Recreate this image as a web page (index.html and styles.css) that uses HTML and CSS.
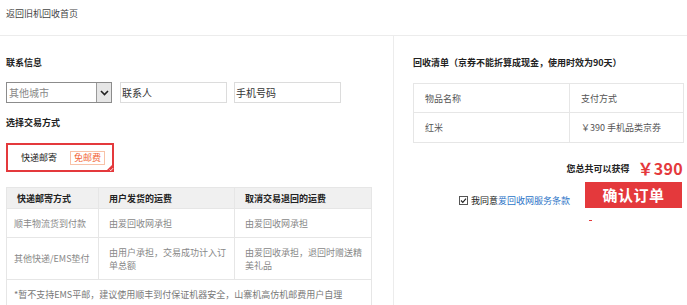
FILE: index.html
```html
<!DOCTYPE html>
<html lang="zh-CN">
<head>
<meta charset="utf-8">
<title>确认订单</title>
<link rel="stylesheet" href="styles.css">
</head>
<body>
<div class="topbar">返回旧机回收首页</div>
<div class="main">
  <div class="left">
    <div class="title t1">联系信息</div>
    <div class="fields">
      <div class="select">
        <span class="sel-text">其他城市</span>
        <span class="sel-arrow"><svg width="9" height="6" viewBox="0 0 9 6"><path d="M1 1 L4.5 4.5 L8 1" fill="none" stroke="#222" stroke-width="1.6"/></svg></span>
      </div>
      <div class="input">联系人</div>
      <div class="input">手机号码</div>
    </div>
    <div class="title t2">选择交易方式</div>
    <div class="option">
      <span class="opt-name">快递邮寄</span>
      <span class="badge">免邮费</span>
      <span class="corner"><svg width="9" height="9" viewBox="0 0 9 9"><path d="M9 0 L9 9 L0 9 Z" fill="#e4393c"/><path d="M4.6 6.6 L5.8 7.7 L8 5.2" fill="none" stroke="#fff" stroke-width="0.9"/></svg></span>
    </div>
    <table class="ship">
      <colgroup><col class="c1"><col class="c2"><col class="c3"></colgroup>
      <tr class="head"><th>快递邮寄方式</th><th>用户发货的运费</th><th>取消交易退回的运费</th></tr>
      <tr class="r1"><td>顺丰物流货到付款</td><td>由爱回收网承担</td><td>由爱回收网承担</td></tr>
      <tr class="r2"><td>其他快递/EMS垫付</td><td>由用户承担，交易成功计入订单总额</td><td>由爱回收承担，退回时赠送精美礼品</td></tr>
      <tr class="r3"><td colspan="3">*暂不支持EMS平邮，建议使用顺丰到付保证机器安全，山寨机高仿机邮费用户自理</td></tr>
    </table>
  </div>
  <div class="right">
    <div class="title t1">回收清单（京券不能折算成现金，使用时效为90天）</div>
    <table class="list">
      <colgroup><col class="l1"><col class="l2"></colgroup>
      <tr class="lh"><td>物品名称</td><td>支付方式</td></tr>
      <tr class="lr"><td>红米</td><td>￥390 手机品类京券</td></tr>
    </table>
    <div class="total"><span class="total-label">您总共可以获得</span><span class="total-num">￥390</span></div>
    <div class="confirm">
      <div class="agree">
        <span class="check"><svg width="9" height="9" viewBox="0 0 9 9"><rect x="0.5" y="0.5" width="8" height="8" fill="#fff" stroke="#555"/><path d="M2 4.5 L3.8 6.3 L7 2.6" fill="none" stroke="#222" stroke-width="1.2"/></svg></span>
        <span>我同意</span><span class="link">爱回收网服务条款</span>
      </div>
      <div class="btn-wrap">
        <div class="btn">确认订单</div>
        <div class="dash"></div>
      </div>
    </div>
  </div>
</div>
</body>
</html>
```

FILE: styles.css
```css
* { box-sizing: border-box; }
html, body { margin: 0; padding: 0; background: #fff; }
body {
  font-family: "Noto Sans CJK SC", "Liberation Sans", sans-serif;
  font-size: 9px;
  color: #333;
  width: 687px;
  height: 305px;
  overflow: hidden;
}
.topbar {
  height: 36px;
  line-height: 12px;
  padding: 8px 0 0 6px;
  border-bottom: 1px solid #ececec;
  color: #444;
}
.main {
  display: flex;
  height: 269px;
}
.left {
  width: 394px;
  border-right: 1px solid #ececec;
  padding: 0 0 0 6px;
}
.right {
  flex: 1;
  padding: 0 3px 0 19px;
}
.title {
  font-weight: bold;
  line-height: 12px;
  color: #222;
}
.t1 { margin-top: 21px; }
.t2 { margin-top: 14px; }
.fields {
  display: flex;
  gap: 8px;
  margin-top: 13px;
  height: 21px;
}
.select {
  width: 106px;
  border: 1px solid #8c8c8c;
  display: flex;
  align-items: stretch;
  font-size: 10px;
  color: #888;
}
.sel-text { flex: 1; line-height: 19px; padding-left: 2px; }
.sel-arrow {
  width: 15px;
  background: #e6e6e6;
  border-left: 1px solid #9a9a9a;
  display: flex;
  align-items: center;
  justify-content: center;
}
.input {
  width: 107px;
  border: 1px solid #dcdcdc;
  font-size: 10px;
  line-height: 19px;
  padding-left: 1px;
  color: #333;
}
.fields .input:last-child { margin-left: -1px; }
.option {
  position: relative;
  margin-top: 14px;
  width: 108px;
  height: 29px;
  border: 2px solid #e4393c;
  display: flex;
  align-items: center;
  padding-left: 13px;
  gap: 13px;
}
.opt-name { color: #222; font-size: 9px; }
.badge {
  border: 1px solid #f8c2a8;
  color: #f2673a;
  font-size: 9px;
  line-height: 12px;
  padding: 0 3px;
}
.corner {
  position: absolute;
  right: -2px;
  bottom: -2px;
  width: 9px;
  height: 9px;
  display: block;
  line-height: 0;
}
.ship {
  margin-top: 15px;
  border-collapse: collapse;
  width: 365px;
  table-layout: fixed;
}
.ship col.c1 { width: 92px; }
.ship col.c2 { width: 136px; }
.ship col.c3 { width: 137px; }
.ship th, .ship td {
  border: 1px solid #e6e6e6;
  text-align: left;
  padding: 0 7px 0 10px;
  font-size: 9px;
  line-height: 13px;
}
.ship th {
  background: #f0f0f0;
  height: 21px;
  color: #222;
  font-weight: bold;
}
.ship td { color: #888; }
.ship td:first-child { padding-left: 7px; }
.ship .r1 td { height: 29px; }
.ship .r2 td { height: 42px; }
.ship .r3 td { height: 30px; padding-left: 7px; color: #777; }
.list {
  margin-top: 14px;
  border-collapse: collapse;
  width: 271px;
  table-layout: fixed;
}
.list col.l1 { width: 156px; }
.list td {
  border: 1px solid #e6e6e6;
  padding: 0 0 0 11px;
  color: #555;
  font-size: 9px;
}
.list .lh td { height: 29px; }
.list .lr td { height: 30px; }
.total {
  display: flex;
  justify-content: flex-end;
  align-items: center;
  gap: 8px;
  margin-top: 16px;
  padding-right: 1px;
  height: 18px;
}
.total-label { font-weight: bold; color: #222; font-size: 9px; }
.total-num { color: #e4393c; font-weight: bold; font-size: 16px; letter-spacing: 0.3px; }
.confirm {
  display: flex;
  justify-content: flex-end;
  gap: 15px;
  margin-top: 5px;
}
.agree {
  display: flex;
  align-items: center;
  padding-top: 12px;
  height: 12px;
  box-sizing: content-box;
  color: #222;
}
.check { line-height: 0; margin-right: 3px; }
.link { color: #2b74c7; }
.btn-wrap { width: 97px; margin-right: 2px; }
.btn {
  height: 26px;
  background: #e4393c;
  color: #fff;
  font-weight: bold;
  font-size: 15px;
  line-height: 26px;
  text-align: center;
  letter-spacing: 0.5px;
}
.dash {
  width: 3px;
  height: 1px;
  background: #e4393c;
  margin: 12px 0 0 4px;
}
```
